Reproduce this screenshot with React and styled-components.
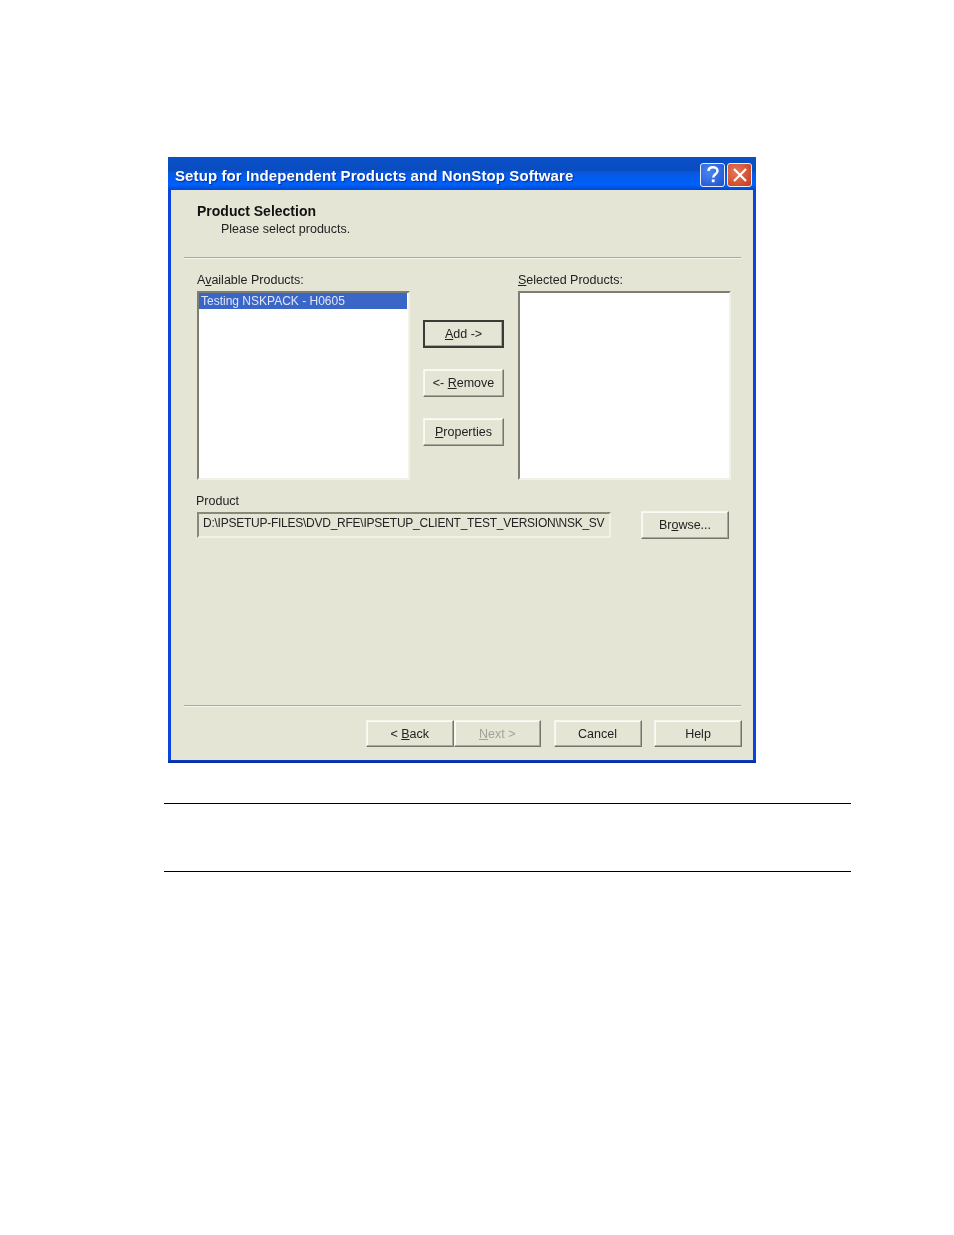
import React from "react";
import styled, { createGlobalStyle } from "styled-components";

const GlobalStyle = createGlobalStyle`
  html, body {
    margin: 0;
    padding: 0;
    background: #fff;
  }
`;

export default function App() {
  return (
    <Page>
      <GlobalStyle />
      <Dialog>
        <TitleBar>
          <Title>Setup for Independent Products and NonStop Software</Title>
          <TitleButtons>
            <HelpBox>
              <svg width="24" height="24" viewBox="0 0 24 24">
                <path d="M7.5 8c0-2.4 2-3.7 4.5-3.7s4.5 1.4 4.5 3.6c0 3.3-4.3 3.4-4.3 6.6" fill="none" stroke="#fff" strokeWidth="2.4" />
                <rect x="10.8" y="16.4" width="2.8" height="2.8" fill="#fff" />
              </svg>
            </HelpBox>
            <CloseBox>
              <svg width="24" height="24" viewBox="0 0 24 24">
                <path d="M6 6l12 12M18 6L6 18" stroke="#fff" strokeWidth="2.2" />
              </svg>
            </CloseBox>
          </TitleButtons>
        </TitleBar>
        <Body>
          <Header>
            <Heading>Product Selection</Heading>
            <SubHeading>Please select products.</SubHeading>
          </Header>
          <Divider />
          <Lists>
            <ListColumn>
              <Label>A<u>v</u>ailable Products:</Label>
              <ListBox>
                <SelectedRow>Testing NSKPACK - H0605</SelectedRow>
              </ListBox>
            </ListColumn>
            <MiddleButtons>
              <SmallButton $primary><u>A</u>dd -&gt;</SmallButton>
              <SmallButton>&lt;- <u>R</u>emove</SmallButton>
              <SmallButton><u>P</u>roperties</SmallButton>
            </MiddleButtons>
            <ListColumn>
              <Label><u>S</u>elected Products:</Label>
              <ListBox />
            </ListColumn>
          </Lists>
          <ProductLabel>Product</ProductLabel>
          <ProductRow>
            <PathField>
              <PathText>D:\IPSETUP-FILES\DVD_RFE\IPSETUP_CLIENT_TEST_VERSION\NSK_SV</PathText>
            </PathField>
            <BrowseButton>Br<u>o</u>wse...</BrowseButton>
          </ProductRow>
          <Spacer />
          <Divider />
          <Footer>
            <WizardPair>
              <PairButton>&lt; <u>B</u>ack</PairButton>
              <PairButton disabled><u>N</u>ext &gt;</PairButton>
            </WizardPair>
            <WizardButton>Cancel</WizardButton>
            <WizardButton>Help</WizardButton>
          </Footer>
        </Body>
      </Dialog>
      <Notes>
        <NoteRule />
        <NoteRule />
      </Notes>
    </Page>
  );
}

const uiFont = `"Liberation Sans", Arial, sans-serif`;

const Page = styled.div`
  width: 954px;
  height: 1235px;
  box-sizing: border-box;
  padding-top: 157px;
  background: #fff;
  overflow: hidden;
`;

const Dialog = styled.div`
  width: 588px;
  height: 606px;
  margin-left: 168px;
  box-sizing: border-box;
  display: flex;
  flex-direction: column;
  background: linear-gradient(to bottom, #0a46dc 0, #0a46dc 99.4%, #0a2a8c 100%);
  filter: blur(0.35px);
`;

const TitleBar = styled.div`
  height: 33px;
  flex: none;
  box-sizing: border-box;
  padding: 6px 4px 0 7px;
  display: flex;
  align-items: flex-start;
  justify-content: space-between;
  background: linear-gradient(
    to bottom,
    #0a50c8 0,
    #0a4cc0 40%,
    #0a58dc 48%,
    #005cf0 60%,
    #0060f8 85%,
    #0048d0 100%
  );
`;

const Title = styled.div`
  margin-top: 4px;
  font: bold 15px/18px ${uiFont};
  letter-spacing: 0.1px;
  color: #fff;
  white-space: nowrap;
  text-shadow: 1px 1px 1px #0a2f90;
`;

const TitleButtons = styled.div`
  display: flex;
  gap: 2px;
`;

const HelpBox = styled.div`
  width: 25px;
  height: 24px;
  box-sizing: border-box;
  border: 1px solid #e8eefc;
  border-radius: 3px;
  display: flex;
  align-items: center;
  justify-content: center;
  background: radial-gradient(circle at 35% 35%, #4a86f2, #1b4fd0);

  svg {
    flex: none;
  }
`;

const CloseBox = styled(HelpBox)`
  background: radial-gradient(circle at 35% 35%, #e8785a, #c43a17);
`;

const Body = styled.div`
  flex: 1;
  margin: 0 3px 3px 3px;
  box-sizing: border-box;
  padding: 0 12px 13px 13px;
  display: flex;
  flex-direction: column;
  background: #e5e5d6;
  font: 12.5px ${uiFont};
  color: #222;
`;

const Header = styled.div`
  height: 67px;
  flex: none;
  box-sizing: border-box;
  padding: 13px 0 0 13px;
`;

const Heading = styled.div`
  font: bold 14px/17px ${uiFont};
  color: #111;
`;

const SubHeading = styled.div`
  margin: 2px 0 0 24px;
  line-height: 15px;
`;

const Divider = styled.div`
  height: 1px;
  flex: none;
  background: #aca899;
  box-shadow: 0 1px 0 #f6f6ee;
`;

const Lists = styled.div`
  display: flex;
  flex: none;
  margin: 15px 0 0 13px;
`;

const ListColumn = styled.div`
  width: 213px;
`;

const Label = styled.div`
  height: 18px;
  line-height: 15px;
  white-space: nowrap;
`;

const ListBox = styled.div`
  height: 189px;
  box-sizing: border-box;
  background: #fff;
  border-style: solid;
  border-width: 2px;
  border-color: #7f7d70 #f2f1e8 #f2f1e8 #7f7d70;
`;

const SelectedRow = styled.div`
  height: 16px;
  margin-right: 1px;
  padding-left: 2px;
  font-size: 12px;
  line-height: 17px;
  background: #3a66c8;
  color: #dfe5f6;
  white-space: nowrap;
`;

const MiddleButtons = styled.div`
  width: 108px;
  flex: none;
  box-sizing: border-box;
  padding: 47px 0 0 13px;
  display: flex;
  flex-direction: column;
  gap: 21px;
`;

const RaisedButton = styled.button`
  padding: 0;
  box-sizing: border-box;
  background: #e5e5d6;
  font: 12.5px ${uiFont};
  color: ${(p) => (p.disabled ? "#a3a295" : "#222")};
  border: 1px solid;
  border-color: #f6f6ee #77756a #77756a #f6f6ee;
  box-shadow: inset -1px -1px 0 #aca899, inset 1px 1px 0 #fbfbf6;
  white-space: nowrap;
`;

const SmallButton = styled(RaisedButton)`
  width: 81px;
  height: 28px;
  ${(p) => p.$primary && "border: 2px solid #3a3a36; box-shadow: inset -1px -1px 0 #aca899;"}
`;

const ProductLabel = styled.div`
  margin: 14px 0 0 12px;
  height: 17px;
  line-height: 15px;
`;

const ProductRow = styled.div`
  display: flex;
  flex: none;
  align-items: center;
  margin-left: 13px;
`;

const PathField = styled.div`
  width: 414px;
  height: 26px;
  box-sizing: border-box;
  padding: 0 0 4px 4px;
  display: flex;
  align-items: center;
  border-style: solid;
  border-width: 2px;
  border-color: #8a8878 #f2f1e8 #f2f1e8 #8a8878;
`;

const PathText = styled.span`
  white-space: nowrap;
  font-size: 12px;
  letter-spacing: -0.25px;
`;

const BrowseButton = styled(RaisedButton)`
  width: 88px;
  height: 28px;
  margin-left: 30px;
`;

const Spacer = styled.div`
  flex: 1;
`;

const Footer = styled.div`
  display: flex;
  flex: none;
  justify-content: flex-end;
  gap: 12.5px;
  margin: 14px -1px 0 0;
`;

const WizardPair = styled.div`
  width: 175px;
  display: flex;
`;

const WizardButton = styled(RaisedButton)`
  width: 88px;
  height: 27px;
`;

const PairButton = styled(WizardButton)`
  width: 50%;
`;

const Notes = styled.div`
  margin: 40px 0 0 164px;
  width: 687px;
  height: 69px;
  box-sizing: border-box;
  display: flex;
  flex-direction: column;
  justify-content: space-between;
`;

const NoteRule = styled.div`
  height: 1px;
  background: #000;
`;
